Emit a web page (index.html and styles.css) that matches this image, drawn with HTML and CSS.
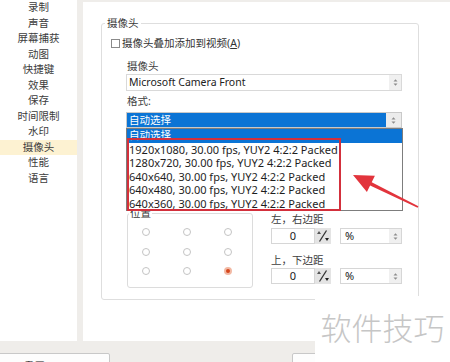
FILE: index.html
```html
<!DOCTYPE html>
<html lang="zh-CN">
<head>
<meta charset="utf-8">
<title>摄像头设置</title>
<link rel="stylesheet" href="styles.css">
</head>
<body>
<div class="window">
  <div class="panes">
    <nav class="sidebar">
      <div class="nav-item">录制</div>
      <div class="nav-item">声音</div>
      <div class="nav-item">屏幕捕获</div>
      <div class="nav-item">动图</div>
      <div class="nav-item">快捷键</div>
      <div class="nav-item">效果</div>
      <div class="nav-item">保存</div>
      <div class="nav-item">时间限制</div>
      <div class="nav-item">水印</div>
      <div class="nav-item active">摄像头</div>
      <div class="nav-item">性能</div>
      <div class="nav-item">语言</div>
    </nav>
    <main class="content">
      <fieldset class="group">
        <legend class="group-title">摄像头</legend>
        <label class="check-row"><span class="checkbox"></span>摄像头叠加添加到视频(<u>A</u>)</label>
        <div class="indent">
          <div class="label first">摄像头</div>
          <div class="select">
            <span class="select-text">Microsoft Camera Front</span>
            <span class="select-arrow"><svg width="5" height="9" viewBox="0 0 5 9"><path d="M0.5 3.5 L2.5 1.2 L4.5 3.5Z M0.5 5.5 L2.5 7.8 L4.5 5.5Z" fill="#8c8c8c"/></svg></span>
          </div>
          <div class="label second">格式:</div>
          <div class="select selected">
            <span class="select-text">自动选择</span>
            <span class="select-arrow"><svg width="5" height="9" viewBox="0 0 5 9"><path d="M0.5 3.5 L2.5 1.2 L4.5 3.5Z M0.5 5.5 L2.5 7.8 L4.5 5.5Z" fill="#8c8c8c"/></svg></span>
          </div>
          <div class="pos-row">
            <fieldset class="pos-box">
              <legend class="pos-title">位置</legend>
              <div class="radio-grid">
                <span class="radio"></span><span class="radio"></span><span class="radio"></span>
                <span class="radio"></span><span class="radio"></span><span class="radio"></span>
                <span class="radio"></span><span class="radio"></span><span class="radio checked"></span>
              </div>
            </fieldset>
            <div class="margins">
              <div class="label m1">左，右边距</div>
              <div class="input-row r1">
                <span class="num">0</span>
                <span class="spin"><svg width="16" height="16" viewBox="0 0 16 16"><path d="M4.5 13.5 L11.5 2.5" stroke="#333" stroke-width="1.3"/><path d="M2 6 L4 3 L6 6Z" fill="#555"/><path d="M10 10 L12 13 L14 10Z" fill="#222"/></svg></span>
                <span class="unit"><span class="unit-text">%</span><span class="select-arrow"><svg width="5" height="9" viewBox="0 0 5 9"><path d="M0.5 3.5 L2.5 1.2 L4.5 3.5Z M0.5 5.5 L2.5 7.8 L4.5 5.5Z" fill="#8c8c8c"/></svg></span></span>
              </div>
              <div class="label m2">上，下边距</div>
              <div class="input-row r2">
                <span class="num">0</span>
                <span class="spin"><svg width="16" height="16" viewBox="0 0 16 16"><path d="M4.5 13.5 L11.5 2.5" stroke="#333" stroke-width="1.3"/><path d="M2 6 L4 3 L6 6Z" fill="#555"/><path d="M10 10 L12 13 L14 10Z" fill="#222"/></svg></span>
                <span class="unit"><span class="unit-text">%</span><span class="select-arrow"><svg width="5" height="9" viewBox="0 0 5 9"><path d="M0.5 3.5 L2.5 1.2 L4.5 3.5Z M0.5 5.5 L2.5 7.8 L4.5 5.5Z" fill="#8c8c8c"/></svg></span></span>
              </div>
            </div>
          </div>
        </div>
      </fieldset>
    </main>
  </div>
  <div class="bottom-bar">
    <button class="btn reset">重置(R)</button>
    <button class="btn ok"></button>
  </div>
</div>

<div class="dropdown">
  <div class="opt hl">自动选择</div>
  <div class="opt">1920x1080, 30.00 fps, YUY2 4:2:2 Packed</div>
  <div class="opt">1280x720, 30.00 fps, YUY2 4:2:2 Packed</div>
  <div class="opt">640x640, 30.00 fps, YUY2 4:2:2 Packed</div>
  <div class="opt">640x480, 30.00 fps, YUY2 4:2:2 Packed</div>
  <div class="opt">640x360, 30.00 fps, YUY2 4:2:2 Packed</div>
</div>
<div class="annot-box"></div>
<svg class="annot-arrow" width="450" height="362" viewBox="0 0 450 362">
  <polygon points="353,175 374.9,175.7 371.7,182.2 418.4,206.3 417.6,207.7 370.1,185.4 366.9,191.9" fill="#e2343c"/>
</svg>
<div class="watermark">软件技巧</div>
</body>
</html>
```

FILE: styles.css
```css
* { box-sizing: border-box; }

html, body {
  margin: 0;
  padding: 0;
}

body {
  width: 450px;
  height: 362px;
  overflow: hidden;
  background: #efedea;
  font-family: "Noto Sans", "Noto Sans CJK SC", sans-serif;
  font-size: 10.5px;
  color: #3a3a3a;
}

.window {
  display: flex;
  flex-direction: column;
  height: 362px;
}

.panes {
  display: flex;
  gap: 6px;
  height: 341px;
}

.sidebar {
  width: 77px;
  background: #fff;
  display: flex;
  flex-direction: column;
}

.nav-item {
  height: 15.5px;
  line-height: 15.5px;
  text-align: center;
  color: #3c3c3c;
}

.nav-item.active {
  background: #fdf2d2;
}

.content {
  flex: 1;
  margin-top: 2px;
  background: #fff;
  padding-top: 14px;
  padding-left: 18px;
}

.group {
  margin: 0;
  padding: 0;
  width: 318px;
  height: 284px;
  border: 1px solid #dedede;
  border-radius: 3px;
  min-width: 0;
}

.group-title {
  margin-left: 3px;
  padding: 0 2px;
  line-height: 14px;
  color: #3a3a3a;
}

.check-row {
  display: flex;
  align-items: center;
  margin-top: 6px;
  padding-left: 9px;
  height: 14px;
  line-height: 14px;
  color: #333;
}

.checkbox {
  width: 9px;
  height: 9px;
  border: 1px solid #8a8a8a;
  background: #fff;
  margin-right: 2px;
}

.indent {
  padding-left: 24px;
  padding-right: 16px;
}

.label {
  line-height: 14px;
  height: 14px;
  color: #3e3e3e;
  padding-left: 1px;
}

.label.first { margin-top: 9px; }
.label.second { margin-top: 3px; }

.select {
  display: flex;
  align-items: stretch;
  height: 17px;
  margin-top: 1px;
  border: 1px solid #d9d9d9;
  background: #fff;
}

.select-text {
  flex: 1;
  line-height: 15px;
  padding-left: 2px;
  font-size: 10.5px;
  color: #222;
  white-space: nowrap;
  overflow: hidden;
}

.select-arrow {
  width: 12px;
  background: #f0f0f0;
  display: flex;
  align-items: center;
  justify-content: center;
}

.select.selected {
  height: 16px;
  margin-top: 4px;
  border-color: #c9c9c9;
}

.select.selected .select-text {
  background: #0b74d5;
  color: #fff;
  line-height: 14px;
  font-size: 10.5px;
}

.select.selected .select-arrow {
  width: 15px;
  background: #ececec;
}

.pos-row {
  display: flex;
  margin-top: 78px;
}

.pos-box {
  margin: 0 0 0 1px;
  padding: 0;
  width: 126px;
  height: 82px;
  border: 1px solid #dcdcdc;
  border-radius: 3px;
  min-width: 0;
}

.pos-title {
  margin-left: 1px;
  padding: 0 1px;
  line-height: 14px;
  color: #3a3a3a;
}

.radio-grid {
  display: grid;
  grid-template-columns: repeat(3, 8px);
  grid-auto-rows: 8px;
  column-gap: 33px;
  row-gap: 11.5px;
  padding-top: 8px;
  padding-left: 14px;
}

.radio {
  width: 8px;
  height: 8px;
  border: 1px solid #c4c4c4;
  border-radius: 50%;
  background: #fff;
}

.radio.checked {
  border: 2px solid #f2b9a4;
  background: #d6461c;
}

.margins {
  flex: 1;
  margin-left: 17px;
}

.label.m1 { margin-top: 6px; }
.label.m2 { margin-top: 9px; }

.input-row {
  display: flex;
  height: 16px;
  margin-left: 1px;
}

.input-row.r1 { margin-top: 2px; }
.input-row.r2 { margin-top: 1px; }

.num {
  width: 44px;
  border: 1px solid #d6d6d6;
  text-align: center;
  line-height: 14px;
  font-size: 11px;
  color: #222;
  background: #fff;
}

.spin {
  width: 16px;
  background: #e4e4e4;
  display: flex;
}

.unit {
  flex: 1;
  margin-left: 9px;
  display: flex;
  border: 1px solid #d6d6d6;
  background: #fff;
}

.unit-text {
  flex: 1;
  padding-left: 4px;
  line-height: 14px;
  font-size: 11px;
  color: #222;
}

.bottom-bar {
  display: flex;
  padding-top: 12px;
  height: 21px;
}

.btn {
  height: 22px;
  border: 1px solid #c8c8c8;
  border-radius: 2px;
  background: #fdfdfd;
  font-family: inherit;
  font-size: 10.5px;
  color: #222;
  padding: 4px 0 0;
  line-height: 14px;
  text-align: center;
}

.btn.reset {
  width: 138px;
  margin-left: -28px;
}

.btn.ok {
  width: 100px;
  margin-left: 182px;
}

.dropdown {
  position: absolute;
  left: 126px;
  top: 128px;
  width: 277px;
  height: 83px;
  border: 1px solid #7d7d7d;
  background: #fff;
}

.opt {
  height: 13.5px;
  line-height: 13.5px;
  padding-left: 2px;
  font-size: 11px;
  color: #1e1e1e;
  white-space: nowrap;
}

.opt.hl {
  background: #0b74d5;
  color: #fff;
  font-size: 10.5px;
}

.annot-box {
  position: absolute;
  left: 127px;
  top: 138px;
  width: 214px;
  height: 73px;
  border: 2px solid #d3303c;
}

.annot-arrow {
  position: absolute;
  left: 0;
  top: 0;
  pointer-events: none;
}

.watermark {
  position: absolute;
  left: 315px;
  top: 296px;
  width: 135px;
  height: 66px;
  background: #fff;
  font-family: "Noto Sans CJK SC", sans-serif;
  font-size: 31px;
  font-weight: 300;
  color: #c6c6c6;
  text-align: center;
  line-height: 62px;
}
```
